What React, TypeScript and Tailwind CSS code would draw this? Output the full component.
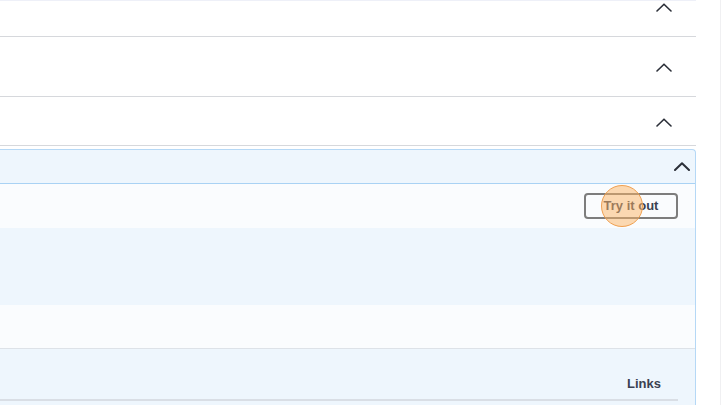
const Chevron = ({ bold }: { bold?: boolean }) => (
  <svg width="16" height="9" viewBox="0 0 16 9" fill="none" className="block">
    <polyline
      points="1,8 8,1.2 15,8"
      stroke="#2b2f38"
      strokeWidth={bold ? 2 : 1.6}
      strokeLinecap="round"
      strokeLinejoin="round"
    />
  </svg>
);

export default function App() {
  return (
    <div
      className="relative flex h-[405px] w-full overflow-hidden bg-white"
      style={{ fontFamily: '"Liberation Sans", Arial, sans-serif' }}
    >
      <div className="flex w-[696px] shrink-0 flex-col">
        {/* tag rows, collapsed */}
        <div className="flex h-[37px] justify-end border-t border-b border-t-[#eef0f8] border-b-[#d6d8dc] pr-[24px] pt-[2px]">
          <Chevron />
        </div>
        <div className="flex h-[60px] items-center justify-end border-b border-[#d6d8dc] pr-[24px] pt-[2px]">
          <Chevron />
        </div>
        <div className="flex h-[49px] items-center justify-end border-b border-[#d6d8dc] pr-[24px] pt-[3px]">
          <Chevron />
        </div>

        {/* opblock */}
        <div className="mt-[3px] flex flex-1 flex-col rounded-tr-[4px] border-t border-r border-[#b5d8f6] bg-[#eef6fd]">
          <div className="flex h-[34px] items-center justify-end border-b border-[#a9d2f4] pr-[5px]">
            <Chevron bold />
          </div>
          <div className="flex h-[44px] items-center justify-end bg-[#fafcfe] pr-[17px]">
            <button className="h-[26px] w-[94px] rounded-[4px] border-2 border-[#7d7d7d] bg-transparent text-[13px] font-bold text-[#3b4151]">
              Try it out
            </button>
          </div>
          <div className="h-[77px]" />
          <div className="h-[44px] border-b border-[#dde2e8] bg-[#fafcfe]" />
          <div className="flex flex-col pr-[17px]">
            <div className="flex h-[50px] items-end justify-end pr-[17px] pb-[6px]">
              <span className="text-[13px] font-bold text-[#3b4151]">Links</span>
            </div>
            <div className="h-[2px] bg-[#d9dee5]" />
          </div>
        </div>
      </div>
      <div className="flex-1" />
      <div className="w-px bg-[#f0f0f2]" />

      {/* click indicator */}
      <div className="pointer-events-none absolute left-[601px] top-[185px] h-[42px] w-[42px] rounded-full border border-[#f0a050] bg-[#fbb463]/50" />
    </div>
  );
}
